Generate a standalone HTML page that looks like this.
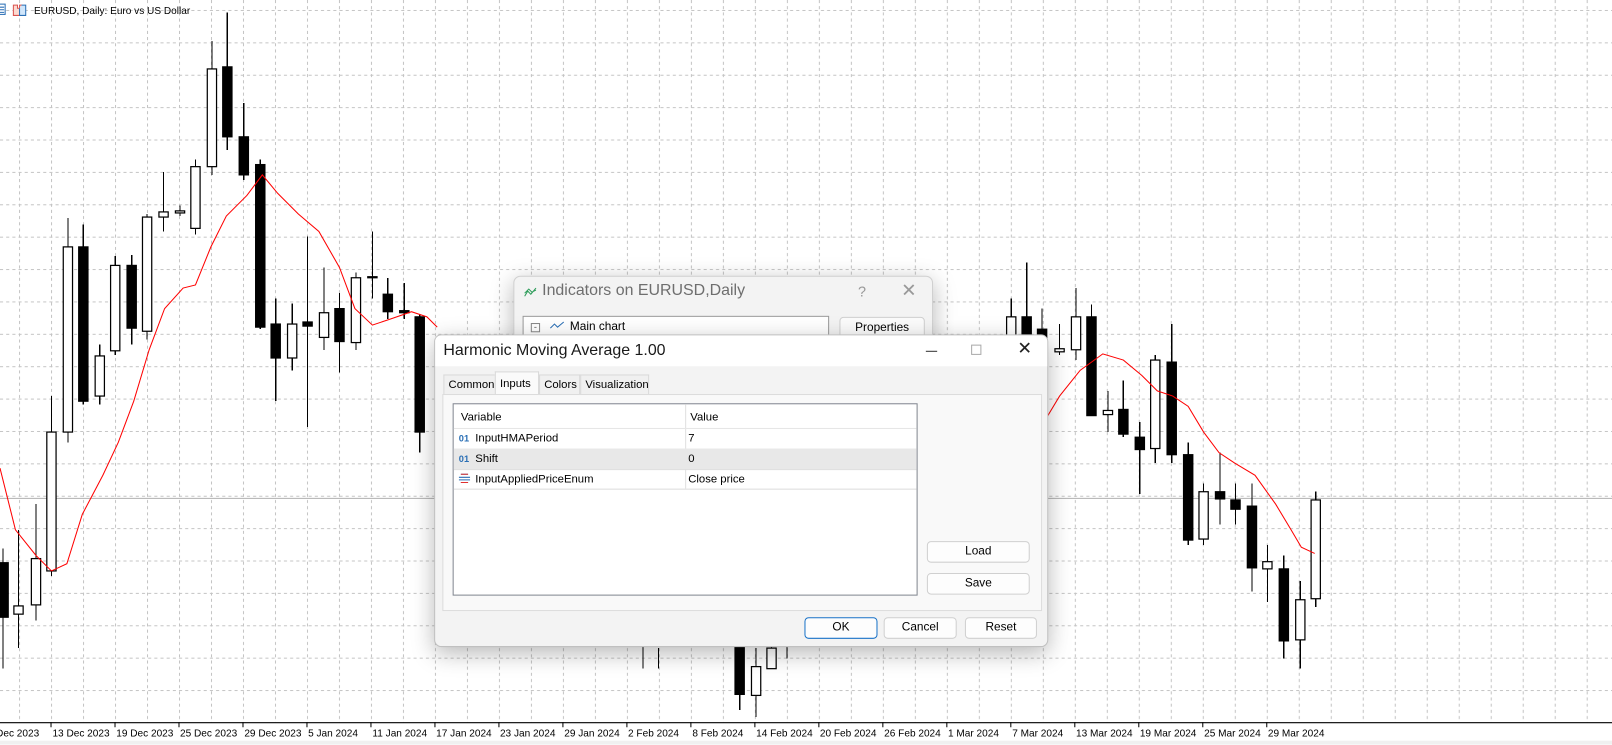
<!DOCTYPE html>
<html><head><meta charset="utf-8"><style>
*{margin:0;padding:0;box-sizing:border-box}
html,body{width:1612px;height:745px;overflow:hidden;background:#fff;font-family:"Liberation Sans",Arial,sans-serif}
#root{position:absolute;left:0;top:0;width:1567px;height:724px;transform:scale(1.02872);transform-origin:0 0}
.abs{position:absolute}
.dlg{position:absolute;border:1px solid #c8c8c8;border-radius:7px;box-shadow:0 6px 22px rgba(0,0,0,.28);overflow:hidden}
.btn{position:absolute;background:#fdfdfd;border:1px solid #d0d0d0;border-radius:4px;font-size:11.5px;text-align:center;color:#000}
.tab{position:absolute;top:38px;height:19px;font-size:11px;border:1px solid #d9d9d9;border-bottom:none;background:#f0f0f0;padding:3px 0 0 4px;color:#000}
.cell{position:absolute;font-size:11px;color:#000}
</style></head><body><div id="root">
<svg class="abs" style="left:0;top:0" width="1567" height="724" viewBox="0 0 1567 724">
<defs>
<pattern id="gv" x="18.5" y="0" width="31.1" height="724" patternUnits="userSpaceOnUse"><line x1="0.5" y1="0" x2="0.5" y2="724" stroke="#c4c4c4" stroke-width="1" stroke-dasharray="3,3"/></pattern>
<pattern id="gh" x="0" y="9.7" width="1567" height="31.48" patternUnits="userSpaceOnUse"><line x1="0" y1="0.5" x2="1567" y2="0.5" stroke="#c4c4c4" stroke-width="1" stroke-dasharray="3,3"/></pattern>
</defs>
<rect x="0" y="0" width="1567" height="702" fill="url(#gv)"/>
<rect x="0" y="0" width="1567" height="702" fill="url(#gh)"/>
<line x1="0" y1="484.5" x2="1567" y2="484.5" stroke="#b0b0b0"/>
<g stroke="#000" stroke-width="1.2" shape-rendering="crispEdges">
<!-- wicks -->
<path d="M3 533V650M18 515V630M35 490V603M50 385V560M66 212V430M81 218V393M97 335V393M112 249V345M128 248V335M143 208V330M159 167V225M175 200V210M190 155V228M206 40V170M221 12V146M237 100V175M253 155V320M268 290V390M284 295V360M299 230V415M315 260V340M330 285V362M346 265V340M362 225V290M377 270V310M393 275V310M408 305V440
M983 290V340M998 255V330M1013 300V340M1030 315V345M1046 280V350M1061 296V404M1077 380V420M1092 370V425M1108 410V480M1123 345V450M1139 315V450M1155 430V530M1170 470V530M1186 440V510M1201 470V510M1217 470V575M1232 530V585M1248 540V640M1264 565V650M1279 478V590
M625 627V650M640 630V650M719 610V690M735 630V697M750 628V650M765 628V640"/>
</g>
<g stroke="#000" stroke-width="1.2">
<rect x="-1" y="547" width="9" height="53" fill="#000"/>
<rect x="13.5" y="589" width="9" height="8" fill="#fff"/>
<rect x="30.5" y="543" width="9" height="45" fill="#fff"/>
<rect x="45.5" y="420" width="9" height="135" fill="#fff"/>
<rect x="61.5" y="240" width="9" height="180" fill="#fff"/>
<rect x="76.5" y="240" width="9" height="150" fill="#000"/>
<rect x="92.5" y="346" width="9" height="39" fill="#fff"/>
<rect x="107.5" y="258" width="9" height="83" fill="#fff"/>
<rect x="123.5" y="258" width="9" height="61" fill="#000"/>
<rect x="138.5" y="211" width="9" height="111" fill="#fff"/>
<rect x="154.5" y="206" width="9" height="5" fill="#fff"/>
<rect x="170.5" y="205" width="9" height="2" fill="#fff"/>
<rect x="185.5" y="162" width="9" height="60" fill="#fff"/>
<rect x="201.5" y="67" width="9" height="95" fill="#fff"/>
<rect x="216.5" y="65" width="9" height="68" fill="#000"/>
<rect x="232.5" y="133" width="9" height="37" fill="#000"/>
<rect x="248.5" y="160" width="9" height="158" fill="#000"/>
<rect x="263.5" y="315" width="9" height="33" fill="#000"/>
<rect x="279.5" y="315" width="9" height="33" fill="#fff"/>
<rect x="294.5" y="313" width="9" height="4" fill="#000"/>
<rect x="310.5" y="304" width="9" height="24" fill="#fff"/>
<rect x="325.5" y="300" width="9" height="32" fill="#000"/>
<rect x="341.5" y="270" width="9" height="63" fill="#fff"/>
<rect x="357.5" y="269" width="9" height="1" fill="#000"/>
<rect x="372.5" y="286" width="9" height="17" fill="#000"/>
<rect x="388.5" y="302" width="9" height="2" fill="#000"/>
<rect x="403.5" y="308" width="9" height="112" fill="#000"/>
<rect x="978.5" y="308" width="9" height="22" fill="#fff"/>
<rect x="993.5" y="308" width="9" height="17" fill="#000"/>
<rect x="1008.5" y="320" width="9" height="20" fill="#000"/>
<rect x="1025.5" y="339" width="9" height="3" fill="#fff"/>
<rect x="1041.5" y="308" width="9" height="32" fill="#fff"/>
<rect x="1056.5" y="308" width="9" height="96" fill="#000"/>
<rect x="1072.5" y="399" width="9" height="4" fill="#fff"/>
<rect x="1087.5" y="398" width="9" height="24" fill="#000"/>
<rect x="1103.5" y="425" width="9" height="12" fill="#000"/>
<rect x="1118.5" y="350" width="9" height="86" fill="#fff"/>
<rect x="1134.5" y="352" width="9" height="90" fill="#000"/>
<rect x="1150.5" y="442" width="9" height="83" fill="#000"/>
<rect x="1165.5" y="478" width="9" height="46" fill="#fff"/>
<rect x="1181.5" y="478" width="9" height="7" fill="#000"/>
<rect x="1196.5" y="486" width="9" height="9" fill="#000"/>
<rect x="1212.5" y="492" width="9" height="60" fill="#000"/>
<rect x="1227.5" y="546" width="9" height="7" fill="#fff"/>
<rect x="1243.5" y="553" width="9" height="70" fill="#000"/>
<rect x="1259.5" y="583" width="9" height="39" fill="#fff"/>
<rect x="1274.5" y="486" width="9" height="96" fill="#fff"/>
<rect x="714.5" y="628" width="9" height="47" fill="#000"/>
<rect x="730.5" y="648" width="9" height="28" fill="#fff"/>
<rect x="745.5" y="630" width="9" height="20" fill="#fff"/>
</g>
<polyline fill="none" stroke="#f00" stroke-width="1" points="0,455 15,515 35,540 50,555 65,548 80,500 100,462 115,430 130,390 145,340 160,300 178,280 190,277 205,240 220,210 240,190 255,170 270,188 290,208 310,225 330,260 345,300 362,316 380,310 400,303 415,308 425,318"/>
<polyline fill="none" stroke="#f00" stroke-width="1" points="1018,405 1030,385 1050,360 1072,344 1092,350 1110,365 1125,380 1140,385 1155,395 1170,420 1185,440 1200,450 1220,462 1240,490 1255,515 1265,532 1278,538"/>
<line x1="0" y1="702.5" x2="1567" y2="702.5" stroke="#000"/>
<rect x="0" y="720" width="1567" height="4" fill="#f0f0f0"/>
<g stroke="#000"><path d="M49.6 702V707M111.8 702V707M174 702V707M236.2 702V707M298.4 702V707M360.6 702V707M422.8 702V707M485 702V707M547.2 702V707M609.4 702V707M671.6 702V707M733.8 702V707M796 702V707M858.2 702V707M920.4 702V707M982.6 702V707M1044.8 702V707M1107 702V707M1169.2 702V707M1231.4 702V707"/></g>
<g font-family="Liberation Sans, Arial, sans-serif" font-size="9.8" fill="#000">
<text x="-12" y="716">7 Dec 2023</text><text x="51" y="716">13 Dec 2023</text><text x="113" y="716">19 Dec 2023</text><text x="175" y="716">25 Dec 2023</text><text x="237.5" y="716">29 Dec 2023</text><text x="299.5" y="716">5 Jan 2024</text><text x="362" y="716">11 Jan 2024</text><text x="424" y="716">17 Jan 2024</text><text x="486" y="716">23 Jan 2024</text><text x="548.5" y="716">29 Jan 2024</text><text x="610.5" y="716">2 Feb 2024</text><text x="673" y="716">8 Feb 2024</text><text x="735" y="716">14 Feb 2024</text><text x="797" y="716">20 Feb 2024</text><text x="859.5" y="716">26 Feb 2024</text><text x="921.5" y="716">1 Mar 2024</text><text x="984" y="716">7 Mar 2024</text><text x="1046" y="716">13 Mar 2024</text><text x="1108" y="716">19 Mar 2024</text><text x="1170.5" y="716">25 Mar 2024</text><text x="1232.5" y="716">29 Mar 2024</text>
<text x="33" y="13.5">EURUSD, Daily:  Euro vs US Dollar</text>
</g>
<g stroke-width="1">
<rect x="-2" y="4" width="7" height="10" fill="#fff" stroke="#2a6fb5"/><path d="M0 7H4M0 9.5H4M0 12H4" stroke="#2a6fb5"/>
<path d="M13 5H17V8H19V5H21V15H13Z" fill="#fcd9d0" stroke="#d9534f"/>
<path d="M21 5H25V15H19V8" fill="#d0e6fb" stroke="#2a6fb5"/>
</g>
</svg>

<!-- Indicators dialog -->
<div class="dlg" style="left:499px;top:268px;width:408px;height:120px;background:#f3f3f3;border-color:#d0d0d0">
<svg class="abs" style="left:9px;top:9px" width="14" height="12"><path d="M1 10L4 5L7 8L12 2M1 7L5 3L8 6L12 4" fill="none" stroke="#2e9c5a" stroke-width="1"/></svg>
<div class="abs" style="left:27px;top:5px;font-size:15.5px;color:#6e6e6e">Indicators on EURUSD,Daily</div>
<div class="abs" style="left:334px;top:6px;font-size:14px;color:#999">?</div>
<div class="abs" style="left:376px;top:3px;font-size:18px;color:#999">✕</div>
<div class="abs" style="left:8px;top:38px;width:298px;height:40px;background:#fff;border:1px solid #9a9a9a"></div>
<div class="abs" style="left:16px;top:45px;width:9px;height:9px;border:1px solid #888;font-size:9px;line-height:6px;text-align:center;color:#555">-</div>
<svg class="abs" style="left:34px;top:42px" width="16" height="12"><path d="M1 8L5 4L8 7L14 2" fill="none" stroke="#2a6fb5"/></svg>
<div class="abs" style="left:54px;top:43px;font-size:11.5px">Main chart</div>
<div class="btn" style="left:316px;top:39px;width:83px;height:22px;line-height:20px;background:#fbfbfb">Properties</div>
</div>

<!-- Main dialog -->
<div class="dlg" style="left:422px;top:325px;width:597px;height:304px;background:#f3f3f3;border-color:#c0c0c0">
<div class="abs" style="left:0;top:0;width:597px;height:30px;background:#fff"></div>
<div class="abs" style="left:8px;top:6px;font-size:15.5px;color:#1a1a1a">Harmonic Moving Average 1.00</div>
<div class="abs" style="left:477px;top:15px;width:11px;height:1px;background:#333"></div>
<div class="abs" style="left:521px;top:9px;width:10px;height:10px;border:1px solid #aaa"></div>
<div class="abs" style="left:566px;top:3px;font-size:17px;color:#222">✕</div>
<div class="tab" style="left:8px;width:51px">Common</div>
<div class="tab" style="left:58px;top:35px;height:23px;width:43px;background:#fafafa;padding-top:5px">Inputs</div>
<div class="tab" style="left:101px;width:40px">Colors</div>
<div class="tab" style="left:141px;width:67px">Visualization</div>
<div class="abs" style="left:7px;top:57px;width:583px;height:211px;background:#f9f9f9;border:1px solid #dcdcdc"></div>
<div class="abs" style="left:17px;top:66px;width:452px;height:187px;background:#fff;border:1px solid #828790"></div>
<div class="abs" style="left:243px;top:67px;width:1px;height:82px;background:#e0e0e0"></div>
<div class="abs" style="left:18px;top:90px;width:450px;height:1px;background:#e6e6e6"></div>
<div class="abs" style="left:18px;top:110px;width:450px;height:20px;background:#e8e8e8"></div>
<div class="abs" style="left:18px;top:130px;width:450px;height:1px;background:#ddd"></div>
<div class="abs" style="left:18px;top:149px;width:450px;height:1px;background:#ddd"></div>
<div class="cell" style="left:25px;top:74px">Variable</div>
<div class="cell" style="left:248px;top:74px">Value</div>
<div class="cell" style="left:23px;top:95px;font-size:9px;color:#2a6fb5;font-weight:bold">01</div>
<div class="cell" style="left:39px;top:94px">InputHMAPeriod</div>
<div class="cell" style="left:246px;top:94px">7</div>
<div class="cell" style="left:23px;top:115px;font-size:9px;color:#2a6fb5;font-weight:bold">01</div>
<div class="cell" style="left:39px;top:114px">Shift</div>
<div class="cell" style="left:246px;top:114px">0</div>
<svg class="abs" style="left:23px;top:134px" width="11" height="10"><path d="M2 1H9M0 4H11M0 6.5H11M2 9H9" stroke="#2a6fb5"/><path d="M2 1H9M2 9H9" stroke="#e03030"/></svg>
<div class="cell" style="left:39px;top:134px">InputAppliedPriceEnum</div>
<div class="cell" style="left:246px;top:134px">Close price</div>
<div class="btn" style="left:478px;top:200px;width:100px;height:21px;line-height:19px">Load</div>
<div class="btn" style="left:478px;top:231px;width:100px;height:21px;line-height:19px">Save</div>
<div class="btn" style="left:359px;top:274px;width:71px;height:21px;line-height:19px;border:1px solid #1a73c8">OK</div>
<div class="btn" style="left:436px;top:274px;width:71px;height:21px;line-height:19px">Cancel</div>
<div class="btn" style="left:515px;top:274px;width:70px;height:21px;line-height:19px">Reset</div>
</div>
</div></body></html>
